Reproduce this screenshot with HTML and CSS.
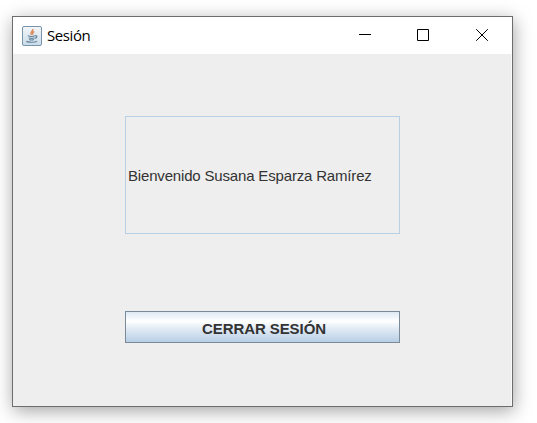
FILE: index.html
```html
<!DOCTYPE html>
<html lang="es">
<head>
<meta charset="utf-8">
<title>Sesión</title>
<link rel="stylesheet" href="styles.css">
</head>
<body>
<main class="window">
  <header class="titlebar">
    <svg class="app-icon" width="20" height="20" viewBox="0 0 20 20" fill="none">
      <defs>
        <linearGradient id="tile" x1="0" y1="0" x2="0" y2="1">
          <stop offset="0" stop-color="#f4f7f9"/>
          <stop offset="1" stop-color="#c9dbe8"/>
        </linearGradient>
      </defs>
      <rect x=".5" y=".5" width="19" height="19" rx="1.500" fill="url(#tile)" stroke="#7894aa"/>
      <path d="M10.800 3c.8 2.200-3.400 2.900-1.400 6M12.300 5.500c-2.300 1.200-1.900 1.900-1.300 3.200" stroke="#d98a5c" stroke-width="1.500"/>
      <path d="M5.800 9.800c2 .8 5.500.7 7.600 0M6.700 11.800c1.700.7 4 .7 5.700 0M7.200 13.500c1.500.6 3.300.6 4.700 0M13.400 9.700c2.200-.4 2 2.200-.6 2.700" stroke="#65839b" stroke-width="1.200"/>
      <path d="M4.300 15.400c2.600 1.200 8.700 1.100 10.800-.2" stroke="#6684a0" stroke-width="1.200"/>
    </svg>
    <h1 class="title">Sesión</h1>
    <div class="controls">
      <svg width="12" height="12" viewBox="0 0 12 12"><path d="M0 5.500h12"/></svg>
      <svg width="12" height="12" viewBox="0 0 12 12"><path d="M.5.500h11v11H.5z"/></svg>
      <svg width="12" height="12" viewBox="0 0 12 12"><path d="M.2.200l11.600 11.600M11.800.200L.2 11.800"/></svg>
    </div>
  </header>
  <section class="content">
    <div class="welcome">Bienvenido Susana Esparza Ramírez</div>
    <button class="logout" type="button">CERRAR SESIÓN</button>
  </section>
</main>
</body>
</html>
```

FILE: styles.css
```css
* { box-sizing: border-box; }

body {
  margin: 0;
  height: 423px;
  padding: 16px 0 0 12px;
  overflow: hidden;
  background: #fff;
}

.window {
  width: 501px;
  height: 391px;
  border: 1px solid #6d6d6d;
  background: #eee;
  box-shadow: inset -1px 0 #fafafa, 1px 4px 17px rgba(0, 0, 0, .36);
}

.titlebar {
  display: flex;
  align-items: center;
  height: 37px;
  padding: 0 24px 0 9px;
  background: #fff;
}

.title {
  margin: 0 0 2px 5px;
  font: 400 15px/20px "Open Sans", sans-serif;
  letter-spacing: -.4px;
  color: #000;
}

.controls {
  display: flex;
  gap: 47px;
  margin: 0 0 1px auto;
}

.controls svg:first-child {
  margin-right: -1px;
}

.controls path {
  fill: none;
  stroke: #000;
  stroke-width: 1;
}

.content {
  display: flex;
  flex-direction: column;
  gap: 77px;
  padding: 62px 0 0 112px;
  font-family: "Liberation Sans", Arial, sans-serif;
  color: #333;
}

.welcome {
  display: flex;
  align-items: center;
  width: 275px;
  height: 118px;
  padding-left: 2px;
  border: 1px solid #b8cfe5;
  font-size: 15px;
  letter-spacing: -.17px;
  white-space: nowrap;
}

.logout {
  width: 275px;
  height: 32px;
  padding: 3px 0 0 3px;
  border: 1px solid #7a8a99;
  border-radius: 0;
  background: linear-gradient(#dde8f3, #fff 30%, #dde8f3 60%, #b8cfe5);
  font: 700 15px "Liberation Sans", Arial, sans-serif;
  letter-spacing: -.08px;
  color: #333;
}
```
